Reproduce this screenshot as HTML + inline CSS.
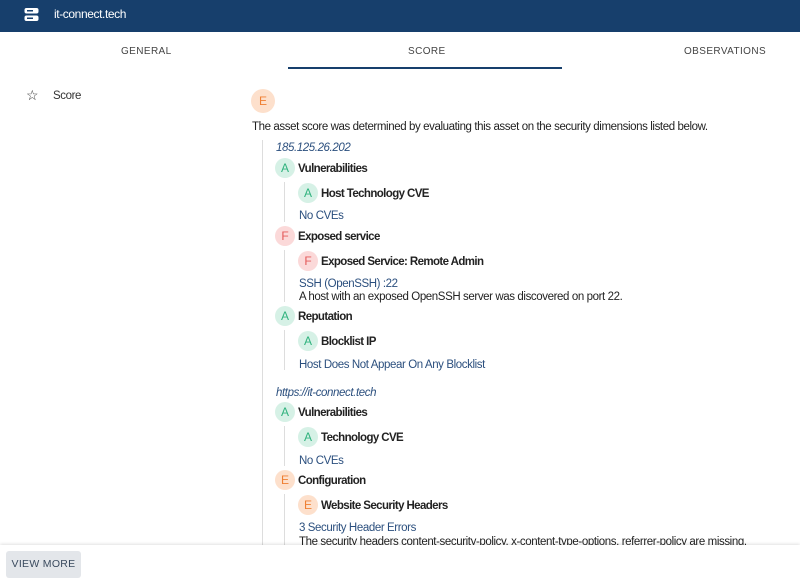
<!DOCTYPE html>
<html><head><style>
*{margin:0;padding:0;box-sizing:border-box}
body{width:800px;height:585px;overflow:hidden;background:#fff;font-family:"Liberation Sans",sans-serif;font-size:11.5px;line-height:21px;color:#222;position:relative;letter-spacing:-0.4px}
.a{position:absolute;white-space:nowrap}
.hdr{position:absolute;left:0;top:0;width:800px;height:32px;background:#173f6c}
.tab{position:absolute;top:41px;font-size:10px;letter-spacing:0.4px;color:#444}
.b{position:absolute;width:20px;height:20px;border-radius:50%;text-align:center;line-height:20px;font-size:12px;letter-spacing:0}
.g{background:#d6f1e6;color:#2fb27d}
.r{background:#fbd9d9;color:#e35a5a}
.o{background:#fde0cc;color:#ef7f33}
.t{font-weight:bold;color:#222;letter-spacing:-0.6px}
.l{color:#2b4f7e}
.vl{position:absolute;width:1px;background:#ddd}
</style></head><body>
<div class="hdr"></div>
<svg class="a" style="left:24px;top:7px" width="15" height="15" viewBox="0 0 15 15"><rect x="0.5" y="1" width="14" height="5.5" rx="2" fill="#fff"/><rect x="0.5" y="8.5" width="14" height="5.5" rx="2" fill="#fff"/><rect x="3" y="3" width="6" height="1.5" fill="#173f6c"/><rect x="3" y="10.5" width="6" height="1.5" fill="#173f6c"/></svg>
<div class="a" style="left:54px;top:4px;color:#fff;font-size:12px">it-connect.tech</div>
<div class="tab" style="left:121px">GENERAL</div>
<div class="tab" style="left:408px">SCORE</div>
<div class="tab" style="left:684px">OBSERVATIONS</div>
<div class="a" style="left:288px;top:67px;width:274px;height:2px;background:#173f6c"></div>
<div class="a" style="left:26px;top:85px;font-size:14px;color:#333">☆</div>
<div class="a" style="left:53px;top:86px;color:#333">Score</div>
<div class="b o" style="left:251px;top:89px;width:24px;height:24px;line-height:24px">E</div>
<div class="a" style="left:252px;top:117px">The asset score was determined by evaluating this asset on the security dimensions listed below.</div>
<div class="vl" style="left:262px;top:140px;height:405px"></div>
<div class="a l" style="left:276px;top:138px;font-style:italic">185.125.26.202</div>

<div class="b g" style="left:275px;top:158px">A</div><div class="a t" style="left:298px;top:159px">Vulnerabilities</div>
<div class="vl" style="left:284px;top:182px;height:40px"></div>
<div class="b g" style="left:298px;top:183px">A</div><div class="a t" style="left:321px;top:184px">Host Technology CVE</div>
<div class="a l" style="left:299px;top:206px">No CVEs</div>

<div class="b r" style="left:275px;top:226px">F</div><div class="a t" style="left:298px;top:227px">Exposed service</div>
<div class="vl" style="left:284px;top:250px;height:52px"></div>
<div class="b r" style="left:298px;top:251px">F</div><div class="a t" style="left:321px;top:252px">Exposed Service: Remote Admin</div>
<div class="a l" style="left:299px;top:274px">SSH (OpenSSH) :22</div>
<div class="a" style="left:299px;top:287px">A host with an exposed OpenSSH server was discovered on port 22.</div>

<div class="b g" style="left:275px;top:306px">A</div><div class="a t" style="left:298px;top:307px">Reputation</div>
<div class="vl" style="left:284px;top:330px;height:40px"></div>
<div class="b g" style="left:298px;top:331px">A</div><div class="a t" style="left:321px;top:332px">Blocklist IP</div>
<div class="a l" style="left:299px;top:355px">Host Does Not Appear On Any Blocklist</div>

<div class="a l" style="left:276px;top:383px;font-style:italic">https://it-connect.tech</div>
<div class="b g" style="left:275px;top:402px">A</div><div class="a t" style="left:298px;top:403px">Vulnerabilities</div>
<div class="vl" style="left:284px;top:426px;height:40px"></div>
<div class="b g" style="left:298px;top:427px">A</div><div class="a t" style="left:321px;top:428px">Technology CVE</div>
<div class="a l" style="left:299px;top:451px">No CVEs</div>

<div class="b o" style="left:275px;top:470px">E</div><div class="a t" style="left:298px;top:471px">Configuration</div>
<div class="vl" style="left:284px;top:494px;height:51px"></div>
<div class="b o" style="left:298px;top:495px">E</div><div class="a t" style="left:321px;top:496px">Website Security Headers</div>
<div class="a l" style="left:299px;top:518px">3 Security Header Errors</div>
<div class="a" style="left:299px;top:532px">The security headers content-security-policy, x-content-type-options, referrer-policy are missing.</div>

<div class="a" style="left:0;top:545px;width:800px;height:40px;background:#fff;box-shadow:0 -1px 3px rgba(0,0,0,0.12)"></div>
<div class="a" style="left:6px;top:551px;width:75px;height:27px;background:#e3e6ea;border-radius:3px;text-align:center;line-height:27px;font-size:10.5px;letter-spacing:0.3px;color:#3a4a5e">VIEW MORE</div>
</body></html>
